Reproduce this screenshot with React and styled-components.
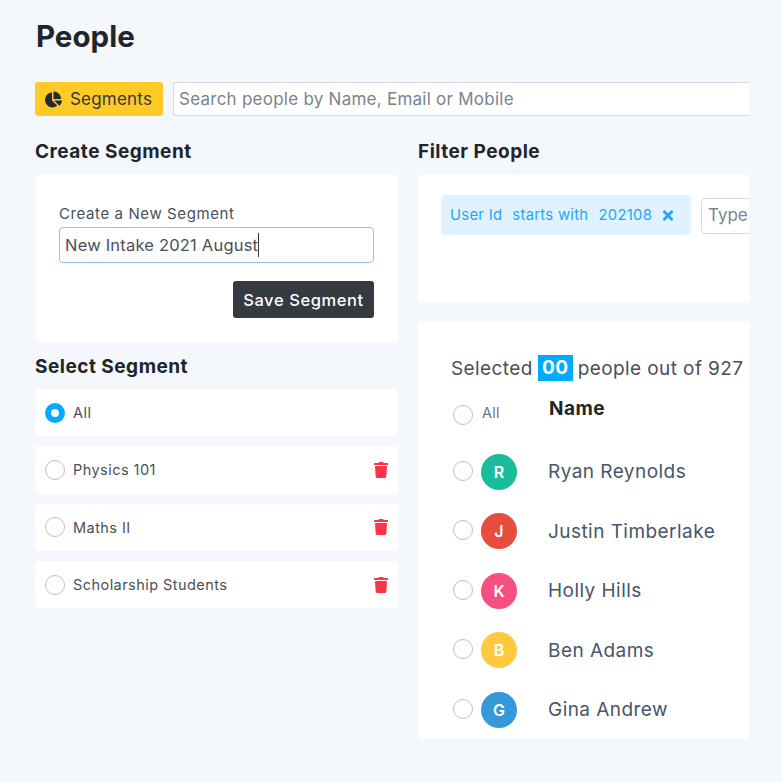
import styled, { createGlobalStyle } from "styled-components";
import { FaTrash, FaTimes, FaChartPie } from "react-icons/fa";

const Global = createGlobalStyle`
    html, body {
        margin:0;
        background:#f4f7fc;
    }
    body {
        font-family:"Inter","Noto Sans",sans-serif;
    }
`
const Page = styled.div`
    width:714px;
    height:782px;
    margin-left:35px;
    overflow:hidden;
`
const Title = styled.h1`
    margin:0;
    padding:18px 0 0 1px;
    box-sizing:border-box;
    height:82px;
    font-size:29.5px;
    line-height:36px;
    font-weight:700;
    color:#212529;
`
const Toolbar = styled.div`
    display:flex;
    gap:10px;
    height:34px;
    margin-bottom:23px;
`
const SegmentsButton = styled.button`
    display:flex;
    align-items:center;
    gap:8px;
    width:128px;
    flex:none;
    padding:0 0 0 10px;
    background:#ffc926;
    border:0;
    border-radius:3px;
    font:400 17px "Inter",sans-serif;
    letter-spacing:.2px;
    color:#343a40;
`
const SearchBox = styled.div`
    flex:1;
    border:1.5px solid #d5dae1;
    border-right:0;
    border-radius:3px 0 0 3px;
    background:#fff;
    padding-left:5px;
    font-size:17px;
    letter-spacing:.25px;
    line-height:33px;
    color:#7b838c;
    white-space:nowrap;
`
const Columns = styled.div`
    display:grid;
    grid-template-columns:363px 331px;
    gap:20px;
`
const Column = styled.div`
    display:flex;
    flex-direction:column;
    min-width:0;
`
const Heading = styled.h2`
    margin:0 0 11px;
    padding-top:1px;
    font-size:19px;
    letter-spacing:.5px;
    line-height:24px;
    font-weight:700;
    color:#212529;
`
const SelectHeading = styled(Heading)`
    margin-bottom:10px;
`
const Card = styled.div`
    background:#fff;
    border-radius:4px;
    box-sizing:border-box;
`
const CreateCard = styled(Card)`
    height:167px;
    padding:28px 24px 0;
    margin-bottom:12px;
`
const FieldLabel = styled.div`
    font-size:15px;
    letter-spacing:.6px;
    line-height:21px;
    color:#495057;
`
const TextField = styled.div`
    display:flex;
    align-items:center;
    height:36px;
    margin-top:3px;
    padding-left:5px;
    box-sizing:border-box;
    border:1px solid #90c2f5;
    border-radius:4px;
    font-size:16.5px;
    letter-spacing:.2px;
    color:#495057;
`
const Caret = styled.span`
    width:1px;
    height:24px;
    background:#333;
`
const SaveRow = styled.div`
    display:flex;
    justify-content:flex-end;
    margin-top:18px;
`
const SaveButton = styled.button`
    width:141px;
    height:37px;
    padding:0;
    background:#343a40;
    border:0;
    border-radius:3px;
    color:#fff;
    font:500 16.5px "Inter",sans-serif;
    letter-spacing:.6px;
`
const SegmentList = styled.div`
    display:flex;
    flex-direction:column;
    gap:10px;
`
const SegmentRow = styled(Card)`
    display:flex;
    align-items:center;
    gap:8px;
    height:47.3px;
    padding:0 10px;
    font-size:14.5px;
    letter-spacing:.45px;
    color:#495057;
`
const RowLabel = styled.span`
    flex:1;
`
const Radio = styled.span`
    display:block;
    flex:none;
    width:20px;
    height:20px;
    box-sizing:border-box;
    border-radius:50%;
    border:${p => p.$checked ? "6.5px solid #00aaff" : "1.5px solid #b9c1ca"};
    background:#fff;
`
const Trash = styled(FaTrash)`
    width:14px;
    height:16px;
    color:#ff3344;
`
const FilterCard = styled(Card)`
    display:flex;
    align-items:flex-start;
    gap:10px;
    width:420px;
    height:127px;
    padding:20px 23px 0;
    margin-bottom:20px;
`
const Chip = styled.div`
    display:flex;
    align-items:center;
    gap:10px;
    flex:none;
    width:250px;
    height:40px;
    padding-left:9px;
    box-sizing:border-box;
    background:#e0f2ff;
    border-radius:3px;
    font-size:14.8px;
    letter-spacing:.3px;
    color:#1ca8f5;
`
const ChipClose = styled(FaTimes)`
    width:14px;
    height:15px;
    margin-left:-1px;
`
const TypeInput = styled.div`
    width:120px;
    height:36px;
    margin-top:3px;
    padding-left:6px;
    box-sizing:border-box;
    border:1.5px solid #d5dae1;
    border-radius:4px;
    font-size:17px;
    line-height:33px;
    color:#7b838c;
`
const PeopleCard = styled(Card)`
    height:417px;
    padding:33px 0 0 33px;
    border-radius:4px 0 0 0;
`
const Selected = styled.div`
    display:flex;
    align-items:center;
    height:26px;
    font-size:19px;
    letter-spacing:.4px;
    color:#495057;
    white-space:pre;
`
const Count = styled.span`
    display:inline-block;
    width:35px;
    margin:0 5px;
    background:#00aaff;
    color:#fff;
    font-weight:700;
    text-align:center;
    line-height:26px;
`
const TableHead = styled.div`
    display:flex;
    align-items:flex-start;
    height:61px;
    padding:23.5px 0 0 2px;
    box-sizing:border-box;
    gap:9px;
`
const AllLabel = styled.span`
    width:58px;
    margin-top:-1px;
    font-size:14.5px;
    line-height:17px;
    letter-spacing:.3px;
    color:#6c757d;
`
const NameHead = styled.span`
    margin-top:-8px;
    font-size:19px;
    letter-spacing:.5px;
    line-height:24px;
    font-weight:700;
    color:#212529;
`
const PersonRow = styled.div`
    display:flex;
    align-items:center;
    height:59.5px;
    padding-left:2px;
`
const Avatar = styled.span`
    display:flex;
    align-items:center;
    justify-content:center;
    flex:none;
    width:36px;
    height:36px;
    margin-left:8px;
    border-radius:50%;
    background:${p => p.$color};
    color:#fff;
    font-size:16px;
    font-weight:600;
`
const PersonName = styled.span`
    margin-left:31px;
    font-size:19px;
    letter-spacing:.45px;
    color:#46566b;
    white-space:nowrap;
`
const RowRadio = styled(Radio)`
    margin-top:-2px;
`

const segments = ["Physics 101", "Maths II", "Scholarship Students"]
const people = [
    { name: "Ryan Reynolds", letter: "R", color: "#1abc9c" },
    { name: "Justin Timberlake", letter: "J", color: "#e74c3c" },
    { name: "Holly Hills", letter: "K", color: "#f64f80" },
    { name: "Ben Adams", letter: "B", color: "#ffc83d" },
    { name: "Gina Andrew", letter: "G", color: "#3498db" },
]

export default function App() {
    return (
        <Page>
            <Global />
            <Title>People</Title>
            <Toolbar>
                <SegmentsButton><FaChartPie size={17} color="#212b36" />Segments</SegmentsButton>
                <SearchBox>Search people by Name, Email or Mobile</SearchBox>
            </Toolbar>
            <Columns>
                <Column>
                    <Heading>Create Segment</Heading>
                    <CreateCard>
                        <FieldLabel>Create a New Segment</FieldLabel>
                        <TextField>New Intake 2021 August<Caret /></TextField>
                        <SaveRow><SaveButton>Save Segment</SaveButton></SaveRow>
                    </CreateCard>
                    <SelectHeading>Select Segment</SelectHeading>
                    <SegmentList>
                        <SegmentRow>
                            <Radio $checked />
                            <RowLabel>All</RowLabel>
                        </SegmentRow>
                        {segments.map(s => (
                            <SegmentRow key={s}>
                                <Radio />
                                <RowLabel>{s}</RowLabel>
                                <Trash />
                            </SegmentRow>
                        ))}
                    </SegmentList>
                </Column>
                <Column>
                    <Heading>Filter People</Heading>
                    <FilterCard>
                        <Chip>
                            <span>User Id</span>
                            <span>starts with</span>
                            <span>202108</span>
                            <ChipClose />
                        </Chip>
                        <TypeInput>Type</TypeInput>
                    </FilterCard>
                    <PeopleCard>
                        <Selected>Selected<Count>00</Count>people out of 927</Selected>
                        <TableHead>
                            <Radio />
                            <AllLabel>All</AllLabel>
                            <NameHead>Name</NameHead>
                        </TableHead>
                        {people.map(p => (
                            <PersonRow key={p.name}>
                                <RowRadio />
                                <Avatar $color={p.color}>{p.letter}</Avatar>
                                <PersonName>{p.name}</PersonName>
                            </PersonRow>
                        ))}
                    </PeopleCard>
                </Column>
            </Columns>
        </Page>
    )
}
